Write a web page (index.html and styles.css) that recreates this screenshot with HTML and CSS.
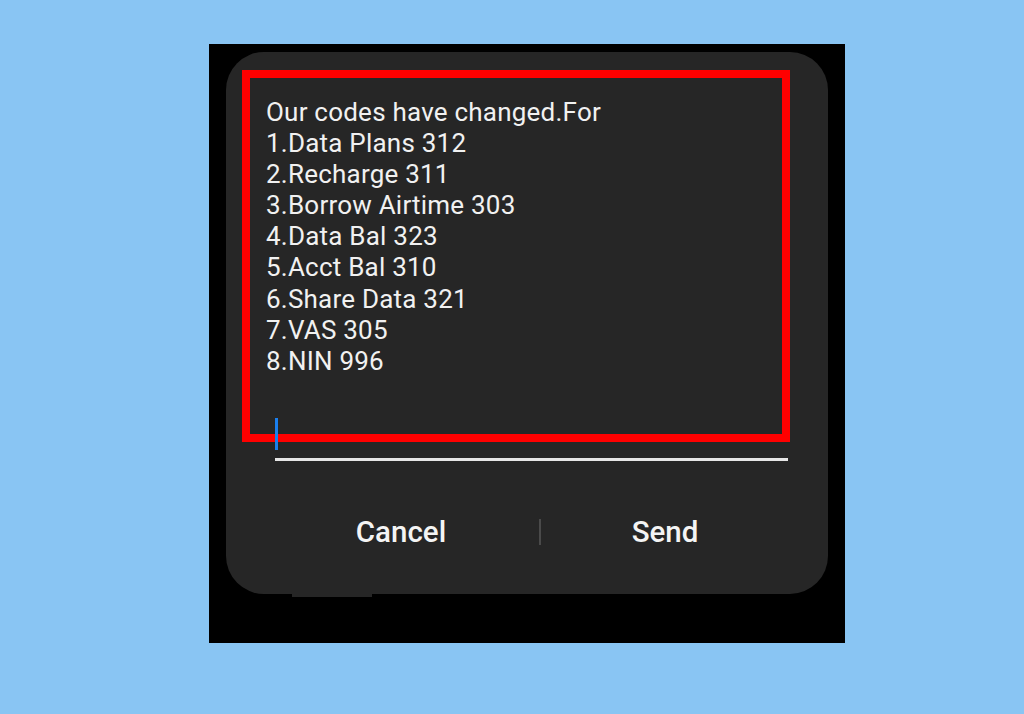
FILE: index.html
```html
<!DOCTYPE html>
<html lang="en">
<head>
<meta charset="utf-8">
<title>USSD dialog</title>
<link rel="stylesheet" href="styles.css">
</head>
<body>
  <div class="phone">
    <div class="dialog">
      <div class="message">
        <div>Our codes have changed.For</div>
        <div>1.Data Plans 312</div>
        <div>2.Recharge 311</div>
        <div>3.Borrow Airtime 303</div>
        <div>4.Data Bal 323</div>
        <div>5.Acct Bal 310</div>
        <div>6.Share Data 321</div>
        <div>7.VAS 305</div>
        <div>8.NIN 996</div>
      </div>
      <div class="field">
        <span class="cursor"></span>
        <div class="underline"></div>
      </div>
      <div class="actions">
        <button class="action">Cancel</button>
        <span class="divider"></span>
        <button class="action">Send</button>
      </div>
      <div class="highlight"></div>
    </div>
    <div class="ghost"></div>
  </div>
</body>
</html>
```
FILE: styles.css
```css
html, body {
  margin: 0;
  padding: 0;
}
body {
  background: #89c5f3;
  width: 1024px;
  height: 714px;
  box-sizing: border-box;
  padding: 44px 0 0 209px;
  font-family: Roboto, "Noto Sans", sans-serif;
  overflow: hidden;
}
.phone {
  width: 636px;
  height: 599px;
  background: #000;
  box-sizing: border-box;
  padding: 8px 0 0 17px;
}
.dialog {
  position: relative;
  width: 602px;
  height: 542px;
  background: #262626;
  border-radius: 38px;
  display: flex;
  flex-direction: column;
}
.message {
  padding: 45px 0 0 40px;
  font-size: 26px;
  line-height: 31.1px;
  letter-spacing: 0.22px;
  color: #f1f1f1;
}
.field {
  margin: 41px 0 0 49px;
  width: 513px;
  display: flex;
  flex-direction: column;
  position: relative;
  z-index: 2;
}
.cursor {
  display: block;
  width: 3px;
  height: 32px;
  background: #1a7fee;
}
.underline {
  margin-top: 8px;
  height: 3px;
  background: #e6e6e6;
}
.actions {
  margin-top: 31px;
  height: 80px;
  display: grid;
  grid-template-columns: 276px 2px 1fr;
  align-items: center;
  padding: 0 39px 0 37px;
}
.action {
  background: none;
  border: 0;
  padding: 0;
  font-family: Roboto, "Noto Sans", sans-serif;
  font-weight: 500;
  font-size: 29.5px;
  line-height: 34px;
  color: #f4f4f4;
  text-align: center;
}
.divider {
  width: 2px;
  height: 26px;
  background: #4a4a4a;
}
.highlight {
  position: absolute;
  left: 16px;
  top: 18px;
  width: 548px;
  height: 372px;
  box-sizing: border-box;
  border: 8px solid #ff0000;
  z-index: 1;
}
.ghost {
  margin-left: 66px;
  width: 80px;
  height: 3px;
  background: #262626;
}
```
